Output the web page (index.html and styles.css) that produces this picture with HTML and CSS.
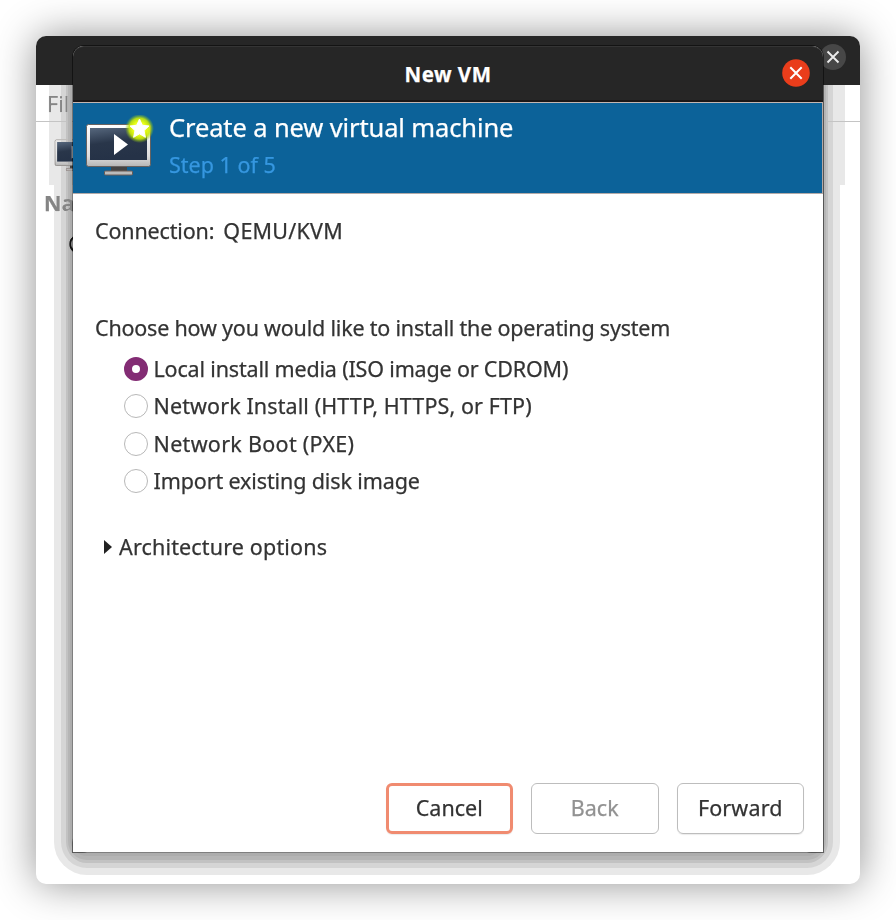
FILE: index.html
```html
<!DOCTYPE html>
<html lang="en">
<head>
<meta charset="utf-8">
<title>New VM</title>
<link rel="stylesheet" href="styles.css">
</head>
<body>
<main class="manager">
  <div class="manager-bar"></div>
  <div class="menu">Fil</div>
  <div class="toolbar">
    <svg width="43" height="38" viewBox="0 0 70 62"><use href="#monitor"/></svg>
  </div>
  <div class="columns">Na</div>
  <div class="row">Q</div>
  <div class="halo"></div>
  <div class="shade"></div>
  <div class="manager-close">
    <svg width="26" height="26" viewBox="0 0 26 26"><circle cx="13" cy="13" r="13" fill="#474747"/><path d="M7.500 7.500l11 11M18.500 7.500l-11 11" stroke="#ececec" stroke-width="1.900"/></svg>
  </div>

  <section class="dialog">
    <header class="titlebar">
      <h1><span class="t-title">New VM</span></h1>
      <svg class="close" width="28" height="28" viewBox="0 0 28 28"><circle cx="14" cy="14" r="13.800" fill="#e93d1b"/><path d="M8.300 8.300l11.400 11.400M19.700 8.300l-11.400 11.400" stroke="#fff" stroke-width="2"/></svg>
    </header>
    <div class="banner">
      <svg class="vm-icon" width="70" height="62" viewBox="0 0 70 62">
        <defs>
          <linearGradient id="frame" x1="0" y1="0" x2="0" y2="1"><stop offset="0" stop-color="#fff"/><stop offset=".75" stop-color="#dedede"/><stop offset="1" stop-color="#b5b5b5"/></linearGradient>
          <linearGradient id="screen" x1="0" y1="0" x2=".25" y2="1"><stop offset="0" stop-color="#56677d"/><stop offset=".5" stop-color="#29364a"/><stop offset="1" stop-color="#253247"/></linearGradient>
          <radialGradient id="glow"><stop offset="0" stop-color="#fff"/><stop offset=".45" stop-color="#eaff18"/><stop offset=".72" stop-color="#c9ea08" stop-opacity=".9"/><stop offset="1" stop-color="#80bd20" stop-opacity="0"/></radialGradient>
          <g id="monitor">
            <path d="M26 51h16v6H26z" fill="#444"/>
            <rect x="19.500" y="56" width="28" height="4" rx="1" fill="#bbb" stroke="#6b5b55"/>
            <rect x="1.500" y="9.500" width="64" height="42" rx="2" fill="url(#frame)" stroke="#676260"/>
            <rect x="5" y="13" width="57" height="32" fill="url(#screen)"/>
            <path d="M29 19v21l14-10.500z" fill="#fff"/>
          </g>
        </defs>
        <use href="#monitor"/>
        <circle cx="54.500" cy="13.500" r="14.500" fill="url(#glow)"/>
        <path d="M54.500 4l2.800 6.300 6.700.7-5 4.500 1.400 6.800-5.900-3.500-5.900 3.500 1.400-6.800-5-4.500 6.700-.7z" fill="#fff" stroke="#fff" stroke-linejoin="round"/>
      </svg>
      <div class="banner-text">
        <div class="banner-title"><span class="t-create">Create a new virtual machine</span></div>
        <div class="banner-step"><span>Step 1 of 5</span></div>
      </div>
    </div>
    <div class="content">
      <div class="connection"><span class="t-conn">Connection:</span><span class="t-qemu">QEMU/KVM</span></div>
      <div class="prompt"><span class="t-prompt">Choose how you would like to install the operating system</span></div>
      <div class="options">
        <div class="option"><i class="radio on"></i><span class="t-local">Local install media (ISO image or CDROM)</span></div>
        <div class="option"><i class="radio"></i><span class="t-net">Network Install (HTTP, HTTPS, or FTP)</span></div>
        <div class="option"><i class="radio"></i><span class="t-boot">Network Boot (PXE)</span></div>
        <div class="option"><i class="radio"></i><span class="t-import">Import existing disk image</span></div>
      </div>
      <div class="arch"><i class="expander"></i><span class="t-arch">Architecture options</span></div>
    </div>
    <footer class="actions">
      <div class="button focus"><span>Cancel</span></div>
      <div class="button disabled"><span>Back</span></div>
      <div class="button"><span class="t-forward">Forward</span></div>
    </footer>
  </section>
</main>
</body>
</html>
```
FILE: styles.css
```css
* { box-sizing: border-box; }
body {
  margin: 0;
  height: 920px;
  padding: 36px;
  overflow: hidden;
  background: #fff;
  color: #333;
  font: 21.5px/30px "Noto Sans", "Open Sans", sans-serif;
  -webkit-text-stroke: .25px currentColor;
}
span { white-space: nowrap; }

.manager {
  position: relative;
  width: 824px;
  height: 848px;
  border-radius: 10px;
  background: #fff;
  box-shadow: 0 0 40px rgba(0, 0, 0, .44);
}
.manager-bar {
  height: 49px;
  border-radius: 10px 10px 0 0;
  background: #262626;
}
.menu {
  height: 37px;
  padding: 4px 0 0 11px;
  border-bottom: 1.500px solid #c4c4c4;
  color: #858585;
}
.toolbar { height: 66px; padding: 12px 0 0 18px; }
.columns {
  height: 36px;
  padding-left: 8px;
  color: #858585;
  font-weight: 700;
}
.row { padding: 5px 0 0 32px; color: #111; }

/* Stepped drop shadow round the dialog */
.halo {
  position: absolute;
  left: 13px;
  top: 49px;
  width: 796px;
  height: 100px;
  background: #e8e8e8;
  mix-blend-mode: darken;
}
.shade {
  position: absolute;
  left: 36px;
  top: 49px;
  width: 750px;
  height: 768px;
  border-radius: 0 0 15px 15px;
  clip-path: inset(0 -40px -40px -40px);
  mix-blend-mode: darken;
  box-shadow: 0 1px 0 2px #adadad, 0 3px 0 4px #b5b5b5, 0 4px 0 6px #c2c2c2, 0 4px 0 11px #d5d5d5, 0 4px 0 18px #e8e8e8;
}
.manager-close { position: absolute; left: 784px; top: 8px; height: 26px; }
svg { display: block; }

.dialog {
  position: absolute;
  left: 37px;
  top: 10px;
  width: 750px;
  height: 806px;
  display: flex;
  flex-direction: column;
  border-radius: 11px 11px 0 0;
  background: #fff;
  box-shadow: 0 0 0 1px rgba(0, 0, 0, .5);
}
.titlebar {
  position: relative;
  height: 56px;
  display: flex;
  align-items: center;
  justify-content: center;
  border-radius: 11px 11px 0 0;
  border-top: 1px solid #343434;
  border-bottom: 2px solid #1c1717;
  background: #262626;
  color: #fff;
}
h1 { margin: 0; font: 700 20.5px/30px "Noto Sans", sans-serif; }
.close { position: absolute; right: 13px; top: 12px; }
.banner {
  height: 92px;
  display: flex;
  padding: 12px 0 0 12px;
  border: 1px solid #b3aaa8;
  border-top-color: #c5b6b2;
  border-left: 0;
  background: #0c6299;
}
.banner-text { padding: 0 0 0 14px; margin-top: -6px; }
.banner-title { color: #fff; font-size: 25.500px; line-height: 36px; }
.banner-step { color: #3697e0; line-height: 30px; padding-top: 5px; }

.content { flex: 1; padding: 22px 22px 0; }
.connection { display: flex; gap: 9px; height: 97px; }
.options { padding: 7px 0 0 28.500px; }
.option { display: flex; align-items: center; height: 37.500px; gap: 6px; }
.radio {
  flex: none;
  width: 24px;
  height: 24px;
  border: 1.500px solid #b8b8b8;
  border-radius: 50%;
  background: #fff;
}
.radio.on { border: 8px solid #832c74; }
.arch { display: flex; align-items: center; padding: 32px 0 0 9px; gap: 7px; }
.expander {
  border-left: 8px solid #222;
  border-top: 7px solid transparent;
  border-bottom: 7px solid transparent;
}
.actions {
  display: flex;
  justify-content: flex-end;
  gap: 18px;
  padding: 0 19px 18px 0;
}
.button {
  width: 127.500px;
  height: 51px;
  display: flex;
  align-items: center;
  justify-content: center;
  padding-bottom: 1px;
  border: 1.500px solid #bdbdbd;
  border-radius: 6px;
  box-shadow: 0 1px 1px rgba(0, 0, 0, .08);
}
.button.focus { border: 3px solid #f08b70; }
.button.disabled { color: #929292; box-shadow: none; }

/* Tracking per label */
.t-title { letter-spacing: .5px; }
.t-create { letter-spacing: -.12px; }
.t-conn { letter-spacing: -.15px; }
.t-qemu { letter-spacing: .25px; }
.t-prompt { letter-spacing: -.2px; }
.t-local { letter-spacing: -.17px; }
.t-net { letter-spacing: .11px; }
.t-boot { letter-spacing: .3px; }
.t-import { letter-spacing: -.12px; }
.t-arch { letter-spacing: .16px; }
.t-forward { letter-spacing: .15px; }
```
